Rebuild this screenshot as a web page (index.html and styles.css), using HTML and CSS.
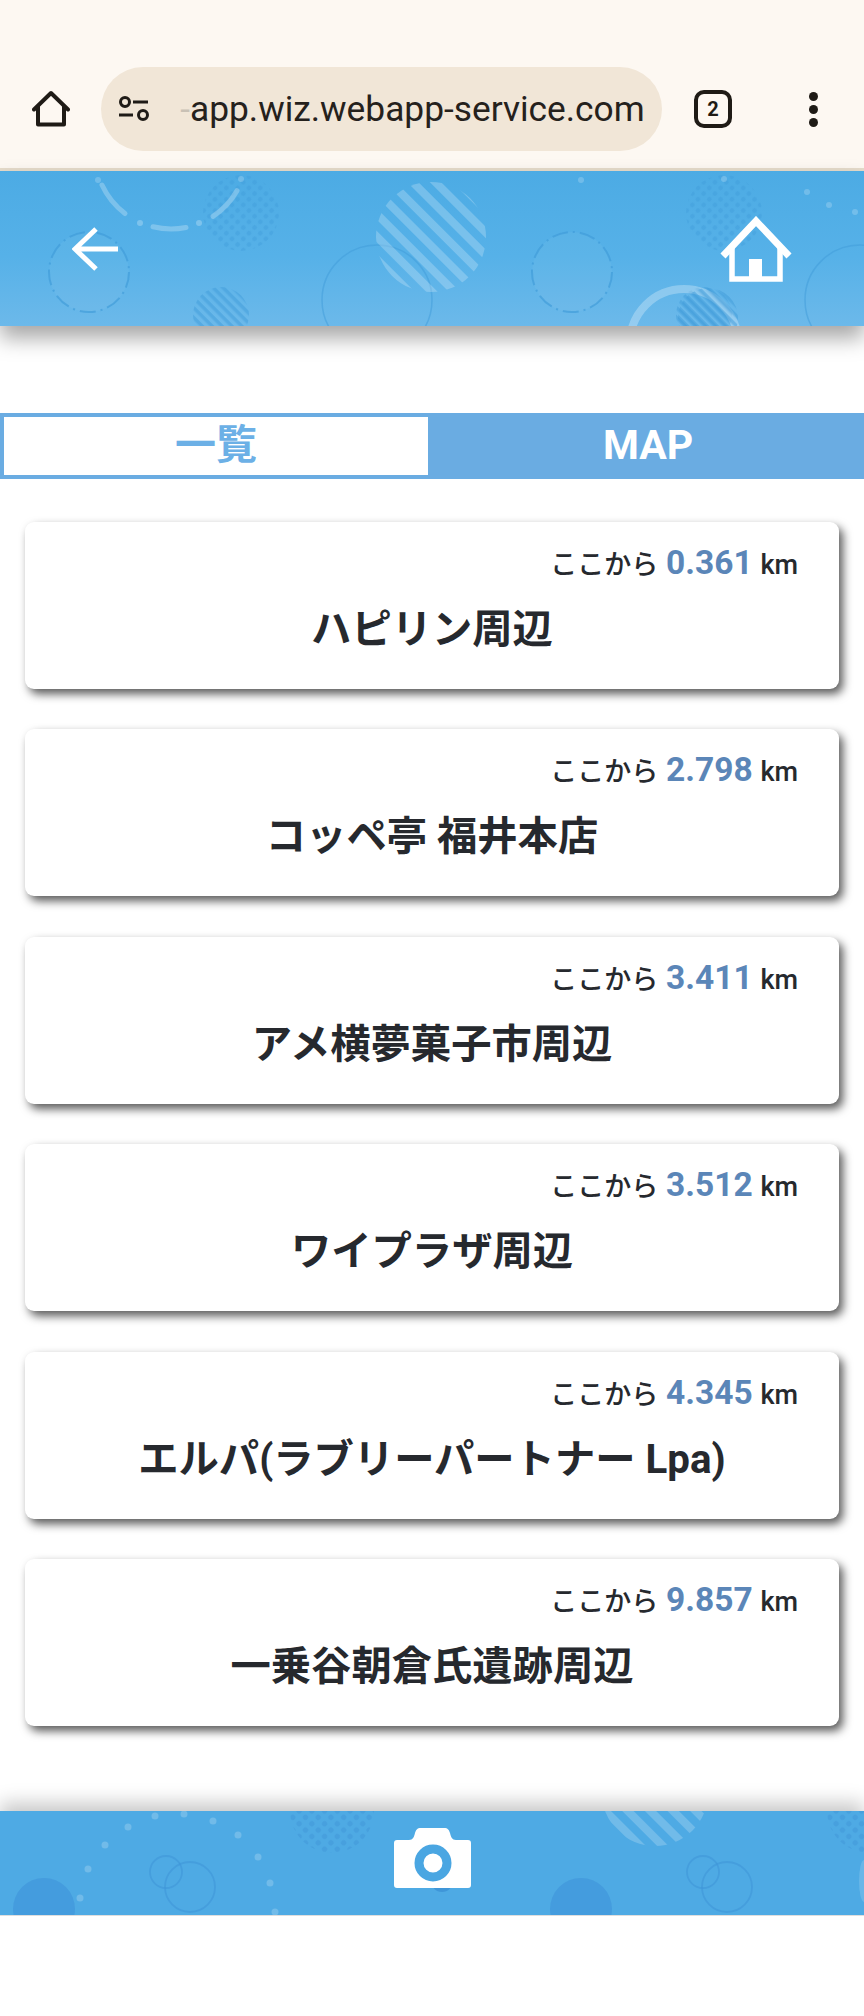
FILE: index.html
```html
<!DOCTYPE html>
<html lang="ja">
<head>
  <meta charset="UTF-8">
  <title>一覧</title>
  <link rel="stylesheet" href="styles.css">
</head>
<body>
  <div class="browser-bar">
    <svg class="chrome-home" width="38" height="38" viewBox="0 0 38 38">
      <path d="M2 19.500 19 3l17 16.500M6 17v17.500h26V17" fill="none" stroke="#1f1b16" stroke-width="4" stroke-linejoin="round" stroke-linecap="round"/>
    </svg>
    <div class="url-pill">
      <svg class="tune" width="34" height="28" viewBox="0 0 34 28">
        <circle cx="8" cy="7" r="4.500" fill="none" stroke="#1f1b16" stroke-width="3"/>
        <path d="M16 7h15M2 20h14" stroke="#1f1b16" stroke-width="3"/>
        <circle cx="26" cy="20" r="4.500" fill="none" stroke="#1f1b16" stroke-width="3"/>
      </svg>
      <span class="url-fade">-</span><span class="url-text">app.wiz.webapp-service.com</span>
    </div>
    <div class="tab-count">2</div>
    <div class="menu-dots"><i></i><i></i><i></i></div>
  </div>

  <header class="top-bar">
    <svg class="deco" width="864" height="155" viewBox="0 0 864 155">
      <defs>
        <pattern id="stripeBig" width="16" height="16" patternUnits="userSpaceOnUse" patternTransform="rotate(45)">
          <rect width="16" height="8" fill="#fff" fill-opacity=".22"/>
        </pattern>
        <pattern id="stripeSmall" width="7" height="7" patternUnits="userSpaceOnUse" patternTransform="rotate(45)">
          <rect width="7" height="3.500" fill="#3f9bd9" fill-opacity=".5"/>
        </pattern>
        <pattern id="dotsHead" width="8" height="8" patternUnits="userSpaceOnUse" patternTransform="rotate(45)">
          <circle cx="4" cy="4" r="2.400" fill="#3f9bd9" fill-opacity=".4"/>
        </pattern>
        <g id="headTile">
          <circle cx="89" cy="101" r="40" fill="#fff" fill-opacity=".04" stroke="#3f9bd9" stroke-opacity=".65" stroke-width="2" stroke-dasharray="16 5 2 5"/>
          <circle cx="241" cy="42" r="38" fill="url(#dotsHead)"/>
          <circle cx="221" cy="144" r="28" fill="url(#stripeSmall)"/>
          <circle cx="377" cy="129" r="55" fill="none" stroke="#3f9bd9" stroke-opacity=".5" stroke-width="1.500"/>
          <circle cx="98" cy="9" r="3" fill="#fff" fill-opacity=".2"/>
          <circle cx="241" cy="8" r="3" fill="#fff" fill-opacity=".2"/>
        </g>
      </defs>
      <use href="#headTile"/>
      <use href="#headTile" x="483"/>
      <g fill="none" stroke="#fff" stroke-opacity=".25" stroke-width="5" stroke-linecap="round">
        <path d="M102 14A76 76 0 0 0 125 42.500"/>
        <path d="M153 55.800A76 76 0 0 0 186 56.500"/>
        <path d="M213 45.300A76 76 0 0 0 237 19.700"/>
      </g>
      <circle cx="140" cy="52" r="3" fill="#fff" fill-opacity=".25"/>
      <circle cx="199" cy="52" r="3" fill="#fff" fill-opacity=".25"/>
      <circle cx="431" cy="66" r="55" fill="url(#stripeBig)"/>
      <circle cx="684" cy="172" r="54" fill="none" stroke="#fff" stroke-opacity=".28" stroke-width="8"/>
      <circle cx="708" cy="147" r="30" fill="url(#stripeSmall)"/>
      <circle cx="807" cy="21" r="3" fill="#fff" fill-opacity=".2"/>
      <circle cx="829" cy="34" r="3" fill="#fff" fill-opacity=".2"/>
      <circle cx="855" cy="41" r="3" fill="#fff" fill-opacity=".2"/>
    </svg>
    <svg class="head-icon" width="46" height="44" viewBox="0 0 46 44">
      <path d="M3 22H46M24 2 3 22l21 20" fill="none" stroke="#fff" stroke-width="5"/>
    </svg>
    <svg class="head-icon" width="72" height="66" viewBox="0 0 72 66">
      <path d="M3 40 36 5l33 35" fill="none" stroke="#fff" stroke-width="7"/>
      <path d="M12 31v32h48V31" fill="none" stroke="#fff" stroke-width="5.500"/>
      <rect x="29" y="43" width="13" height="20" fill="#fff"/>
    </svg>
  </header>

  <main class="content">
    <div class="tabs">
      <div class="tab tab-active">一覧</div>
      <div class="tab">MAP</div>
    </div>

    <ul class="spot-list">
      <li class="spot">
        <p class="spot-dist">ここから <b>0.361</b> <span>km</span></p>
        <h2 class="spot-name">ハピリン周辺</h2>
      </li>
      <li class="spot">
        <p class="spot-dist">ここから <b>2.798</b> <span>km</span></p>
        <h2 class="spot-name">コッペ亭 福井本店</h2>
      </li>
      <li class="spot">
        <p class="spot-dist">ここから <b>3.411</b> <span>km</span></p>
        <h2 class="spot-name">アメ横夢菓子市周辺</h2>
      </li>
      <li class="spot">
        <p class="spot-dist">ここから <b>3.512</b> <span>km</span></p>
        <h2 class="spot-name">ワイプラザ周辺</h2>
      </li>
      <li class="spot">
        <p class="spot-dist">ここから <b>4.345</b> <span>km</span></p>
        <h2 class="spot-name">エルパ(ラブリーパートナー Lpa)</h2>
      </li>
      <li class="spot">
        <p class="spot-dist">ここから <b>9.857</b> <span>km</span></p>
        <h2 class="spot-name">一乗谷朝倉氏遺跡周辺</h2>
      </li>
    </ul>
  </main>

  <footer class="bottom-bar">
    <svg class="deco" width="864" height="104" viewBox="0 0 864 104">
      <defs>
        <pattern id="stripeFoot" width="16" height="16" patternUnits="userSpaceOnUse" patternTransform="rotate(45)">
          <rect width="16" height="8" fill="#fff" fill-opacity=".2"/>
        </pattern>
        <pattern id="dotsFoot" width="9" height="9" patternUnits="userSpaceOnUse" patternTransform="rotate(45)">
          <circle cx="4.500" cy="4.500" r="2.700" fill="#3f96d8" fill-opacity=".5"/>
        </pattern>
        <g id="footTile">
          <circle cx="44" cy="98" r="31" fill="#4298dc" fill-opacity=".8"/>
          <circle cx="166" cy="61" r="16" fill="none" stroke="#3f96d8" stroke-opacity=".6" stroke-width="1.800"/>
          <circle cx="190" cy="76" r="25" fill="none" stroke="#3f96d8" stroke-opacity=".6" stroke-width="1.800"/>
          <circle cx="332" cy="0" r="42" fill="url(#dotsFoot)"/>
        </g>
      </defs>
      <use href="#footTile"/>
      <use href="#footTile" x="537"/>
      <circle cx="442" cy="70" r="11" fill="#3f96d8"/>
      <circle cx="655" cy="-18" r="53" fill="url(#stripeFoot)"/>
      <ellipse cx="864" cy="70" rx="5" ry="21" fill="#fff" fill-opacity=".15"/>
      <g fill="#fff" fill-opacity=".2">
        <circle cx="155" cy="5" r="3.500"/>
        <circle cx="184" cy="3" r="3.500"/>
        <circle cx="213" cy="10" r="3.500"/>
        <circle cx="238" cy="24" r="3.500"/>
        <circle cx="258" cy="46" r="3.500"/>
        <circle cx="270" cy="72" r="3.500"/>
        <circle cx="275" cy="101" r="3.500"/>
        <circle cx="128" cy="16" r="3.500"/>
        <circle cx="105" cy="34" r="3.500"/>
        <circle cx="88" cy="58" r="3.500"/>
        <circle cx="80" cy="87" r="3.500"/>
      </g>
    </svg>
    <svg class="camera" width="77" height="60" viewBox="0 0 77 60">
      <path d="M3 12h12c4 0 5-3 6-7 1-3 2-5 6-5h23c4 0 5 2 6 5 1 4 2 7 6 7h12c2 0 3 1 3 3v42c0 2-1 3-3 3H3c-2 0-3-1-3-3V15c0-2 1-3 3-3z" fill="#fff"/>
      <circle cx="39" cy="35" r="14" fill="none" stroke="#4aa6e2" stroke-width="9"/>
    </svg>
  </footer>
</body>
</html>
```

FILE: styles.css
```css
* {
  box-sizing: border-box;
}

body {
  margin: 0;
  background: #fff;
  font-family: Roboto, "Noto Sans CJK JP", sans-serif;
  color: #26292e;
}

/* browser toolbar */
.browser-bar {
  display: flex;
  align-items: center;
  height: 171px;
  padding: 67px 0 17px 32px;
  background: #fdf8f2;
  border-bottom: 3px solid #e6dccb;
}

.chrome-home {
  flex: none;
  margin-right: 31px;
}

.url-pill {
  display: flex;
  align-items: center;
  width: 561px;
  height: 84px;
  padding-left: 16px;
  border-radius: 42px;
  background: #f1e6d7;
  color: #25211c;
  font-size: 35.300px;
  white-space: nowrap;
}

.tune {
  flex: none;
  margin-right: 23px;
}

.url-fade {
  width: 16px;
  color: #c9c1b5;
  text-align: right;
}

.tab-count {
  flex: none;
  width: 38px;
  height: 38px;
  margin-left: 32px;
  border: 4px solid #1f1b16;
  border-radius: 10px;
  color: #1f1b16;
  font-size: 20px;
  font-weight: 700;
  line-height: 30px;
  text-align: center;
}

.menu-dots {
  display: flex;
  flex-direction: column;
  gap: 4px;
  margin-left: 77px;
}

.menu-dots i {
  display: block;
  width: 9px;
  height: 9px;
  border-radius: 50%;
  background: #1f1b16;
}

/* site header */
.top-bar {
  position: relative;
  display: flex;
  align-items: center;
  justify-content: space-between;
  height: 155px;
  padding: 0 72px 0 72px;
  background: linear-gradient(#4cabe4, #56b1e8 55%, #6cb9ea);
  box-shadow: 0 12px 20px rgba(0, 0, 0, 0.35);
}

.deco {
  position: absolute;
  top: 0;
  left: 0;
}

.head-icon,
.camera {
  position: relative;
}

.content {
  padding: 87px 0 85px;
}

.tabs {
  display: flex;
  height: 66px;
  background: #6aace2;
}

.tab {
  flex: 1;
  padding-left: 4px;
  color: #fff;
  font-size: 41px;
  font-weight: 700;
  line-height: 64px;
  text-align: center;
}

.tab-active {
  flex: none;
  width: 428px;
  padding-left: 0;
  border: 4px solid #6aace2;
  border-right: 0;
  background: #fff;
  color: #6cb0e6;
  line-height: 56px;
}

.spot-list {
  display: flex;
  flex-direction: column;
  gap: 40.400px;
  margin: 43px 0 0;
  padding: 0 25px;
  list-style: none;
}

.spot {
  height: 167px;
  padding-top: 19px;
  border-radius: 9px;
  background: #fff;
  box-shadow: 4px 5px 10px rgba(0, 0, 0, 0.65);
}

.spot-dist {
  margin: 0;
  padding-right: 41px;
  font-size: 27px;
  font-weight: 500;
  line-height: 44px;
  text-align: right;
  word-spacing: 1px;
}

.spot-dist b {
  color: #5b86b8;
  font-size: 33.500px;
  font-weight: 700;
}

.spot-name {
  margin: 18px 0 0;
  font-size: 40.300px;
  font-weight: 700;
  line-height: 50px;
  text-align: center;
}

.bottom-bar {
  position: relative;
  display: flex;
  justify-content: center;
  height: 105px;
  padding-top: 17px;
  padding-left: 1px;
  background: #4eaae4;
  border-bottom: 1px solid #dedede;
  box-shadow: 0 -8px 18px rgba(0, 0, 0, 0.22);
}
```
